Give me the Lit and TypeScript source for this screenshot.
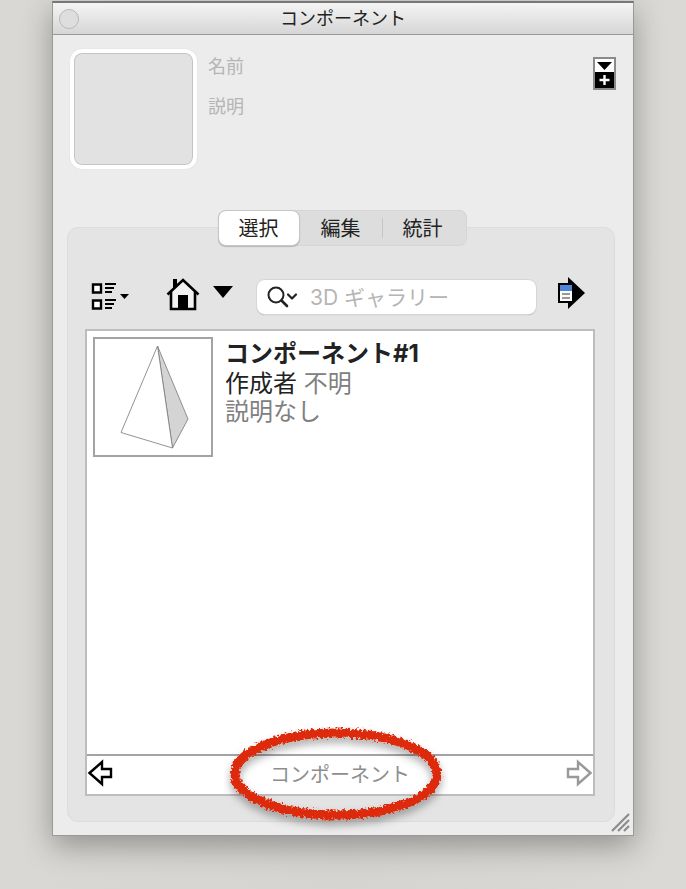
import { LitElement, html, css } from "lit";
import { customElement, state } from "lit/decorators.js";
import { classMap } from "lit/directives/class-map.js";

const TABS = ["選択", "編集", "統計"];

@customElement("app-root")
export class AppRoot extends LitElement {
  @state() private active = 0;

  static styles = css`
    :host {
      display: flex;
      box-sizing: border-box;
      min-height: 100vh;
      padding: 1px 52px 53px;
      background: linear-gradient(90deg, #d9d8d4, #d5d4d1 50%, #dad9d5);
      font-family: Inter, "Noto Sans CJK JP", sans-serif;
      color: #222;
      overflow: hidden;
    }
    * {
      box-sizing: border-box;
    }
    button,
    input {
      font: inherit;
      color: inherit;
      margin: 0;
      padding: 0;
      border: 0;
      background: none;
      outline-offset: 2px;
    }
    svg {
      display: block;
    }
    .window {
      position: relative;
      flex: 1;
      min-width: 0;
      display: flex;
      flex-direction: column;
      border: 1px solid #999;
      border-top: 2px solid #777;
      background: #ececec;
      box-shadow: 0 10px 28px rgba(0, 0, 0, 0.32);
    }
    .titlebar {
      display: grid;
      grid-template-columns: 32px 1fr 32px;
      align-items: center;
      height: 32px;
      border-bottom: 1px solid #999;
      background: linear-gradient(#f4f4f4, #d6d6d6);
    }
    .close {
      width: 20px;
      height: 20px;
      margin-left: 6px;
      border: 1px solid #b9b9b9;
      border-radius: 50%;
      background: #dedede;
    }
    .title {
      margin: 0;
      text-align: center;
      font-size: 18px;
      line-height: 24px;
      font-weight: 400;
    }
    .summary {
      display: flex;
      gap: 11px;
      padding: 14px 17px 0;
    }
    .preview {
      width: 127px;
      height: 120px;
      border: 4px solid #fff;
      border-radius: 12px;
      background: #e2e2e2;
      box-shadow: inset 0 0 0 1px #c4c4c4, 0 0 1px #ccc;
    }
    .fields {
      flex: 1;
      min-width: 0;
      display: flex;
      flex-direction: column;
      gap: 12px;
      padding-top: 3px;
    }
    .fields input {
      width: 100%;
      height: 28px;
      font-size: 18px;
    }
    input::placeholder {
      color: #b5b5b5;
      opacity: 1;
    }
    .expand {
      align-self: flex-start;
      margin-top: 8px;
    }
    .tabs {
      position: relative;
      z-index: 1;
      align-self: center;
      display: flex;
      height: 36px;
      margin: 41px 2px 0 0;
      padding-right: 3px;
      border-radius: 8px;
      background: #dddddd;
      box-shadow: inset 0 0 0 1px #d6d6d6;
    }
    .tab {
      width: 82px;
      padding-top: 2px;
      font-size: 20px;
      line-height: 34px;
      border-radius: 8px;
    }
    .tab.on {
      background: #fff;
      border: 1px solid #c6c6c6;
      line-height: 32px;
      box-shadow: 0 1px 1px rgba(0, 0, 0, 0.2);
    }
    .tab + .tab:not(.on) {
      background: linear-gradient(#c6c6c6, #c6c6c6) left center / 1px 20px no-repeat;
    }
    .tab.on + .tab:not(.on) {
      background: none;
    }
    .panel {
      flex: 1;
      display: flex;
      flex-direction: column;
      gap: 15px;
      margin: -19px 18px 13px 14px;
      padding: 52px 19px 25px 17px;
      border: 1px solid #dcdcdc;
      border-radius: 11px;
      background: #e4e4e4;
    }
    .toolbar {
      display: flex;
      align-items: center;
      height: 34px;
      padding: 0 9px 0 6px;
    }
    .view {
      margin-bottom: 3px;
    }
    .home {
      margin: 0 13px 5px 36px;
    }
    .more {
      margin-bottom: 10px;
    }
    .search {
      flex: 1;
      min-width: 0;
      display: flex;
      align-items: center;
      gap: 12px;
      height: 34px;
      margin: 0 21px 0 24px;
      padding: 0 10px;
      border-radius: 8px;
      background: #fff;
      box-shadow: 0 0 0 1px #d6d6d6, 0 1px 1px #999;
    }
    .search input {
      flex: 1;
      min-width: 0;
      height: 32px;
      font-size: 21px;
    }
    .go {
      margin-bottom: 8px;
    }
    .browser {
      flex: 1;
      display: flex;
      flex-direction: column;
      border: 2px solid #bdbdbd;
      background: #fff;
    }
    .items {
      flex: 1;
      margin: 0;
      padding: 6px;
      list-style: none;
    }
    .item {
      display: flex;
      gap: 12px;
    }
    .thumb {
      flex: none;
      width: 120px;
      height: 120px;
      border: 2px solid #a3a3a3;
    }
    .name,
    .line {
      margin: 0;
      font-size: 24px;
      line-height: 28px;
    }
    .name {
      font-weight: 700;
      line-height: 33px;
    }
    .muted {
      color: #808080;
    }
    .pager {
      position: relative;
      display: flex;
      align-items: center;
      justify-content: space-between;
      height: 40px;
      padding-bottom: 4px;
      border-top: 2px solid #a3a3a3;
      color: #8e8e8e;
      font-size: 20px;
    }
    .mark {
      position: absolute;
      left: calc(50% - 119px);
      top: -42px;
      pointer-events: none;
    }
    .grip {
      position: absolute;
      right: 0;
      bottom: 0;
    }
  `;

  render() {
    return html`
      <main class="window">
        <header class="titlebar">
          <button class="close" aria-label="閉じる"></button>
          <h1 class="title">コンポーネント</h1>
        </header>

        <section class="summary">
          <div class="preview"></div>
          <div class="fields">
            <input aria-label="名前" placeholder="名前" />
            <input aria-label="説明" placeholder="説明" />
          </div>
          <button class="expand" aria-label="表示を切り替え">
            <svg width="23" height="33" viewBox="0 0 23 33">
              <rect x="1" y="1" width="21" height="31" fill="#fff" stroke="#8a8a8a" stroke-width="2" />
              <path d="M4 5h15l-7.500 8z" fill="#000" />
              <path d="M2 15h19v16H2z" fill="#000" />
              <path d="M11.500 18v10M6.500 23h10" stroke="#fff" stroke-width="2.400" />
            </svg>
          </button>
        </section>

        <div class="tabs" role="tablist">
          ${TABS.map(
            (label, i) => html`<button
              role="tab"
              aria-selected=${i === this.active}
              class=${classMap({ tab: true, on: i === this.active })}
              @click=${() => (this.active = i)}
            >${label}</button>`
          )}
        </div>

        <section class="panel">
          <div class="toolbar">
            <button class="view" aria-label="表示オプション">
              <svg width="39" height="28" viewBox="0 0 39 28">
                <path d="M2 2.500h8v8H2zM2 18.500h8v8H2z" fill="#fff" stroke="#000" stroke-width="2.400" />
                <path d="M14 2h11M14 6h9M14 10h7M14 18h11M14 22h9M14 26h7" stroke="#000" stroke-width="2.200" />
                <path d="M29 12h9l-4.500 5z" fill="#000" />
              </svg>
            </button>
            <button class="home" aria-label="モデル内">
              <svg width="34" height="33" viewBox="0 0 34 33">
                <path d="M5 15L17 4l12 11v16H5z" fill="#f2f2f2" />
                <path d="M5 14v17h24V14" fill="none" stroke="#000" stroke-width="2.600" />
                <path d="M1.500 16.500L17 2l15.500 14.500" fill="none" stroke="#000" stroke-width="2.600" />
                <path d="M7 1h4v6L7 11zM12 17h10v14H12z" fill="#000" />
              </svg>
            </button>
            <button class="more" aria-label="ナビゲーション">
              <svg width="20" height="12" viewBox="0 0 20 12"><path d="M0 0h20L10 12z" fill="#000" /></svg>
            </button>
            <label class="search">
              <svg width="31" height="22" viewBox="0 0 31 22" fill="none" stroke="#222" stroke-linecap="round">
                <circle cx="9" cy="9" r="7.500" stroke-width="2" />
                <path d="M14.500 14.500l5.500 5.500" stroke-width="2.600" />
                <path d="M21 8.500l4 4 4-4" stroke-width="2.200" stroke-linejoin="round" />
              </svg>
              <input aria-label="3D ギャラリー" placeholder="3D ギャラリー" />
            </label>
            <button class="go" aria-label="詳細">
              <svg width="29" height="32" viewBox="0 0 29 32">
                <path d="M11 0L28 16 11 32v-6H1V6h10z" fill="#000" />
                <path d="M3 8h12v16H3z" fill="#fff" />
                <path d="M3 8h12v6H3z" fill="#4d86d6" />
                <path d="M5 17h8M5 21h8" stroke="#777" stroke-width="1.600" />
              </svg>
            </button>
          </div>

          <div class="browser">
            <ul class="items">
              <li class="item">
                <svg class="thumb" viewBox="0 0 116 116" stroke-linejoin="round">
                  <path d="M62.500 7L93 80l-15.500 29z" fill="#d4d4d4" stroke="#777" stroke-width=".8" />
                  <path d="M62.500 7L26 93.500 77.500 109z" fill="#fff" stroke="#777" stroke-width=".8" />
                </svg>
                <div>
                  <h2 class="name">コンポーネント#1</h2>
                  <p class="line">作成者 <span class="muted">不明</span></p>
                  <p class="line muted">説明なし</p>
                </div>
              </li>
            </ul>
            <nav class="pager">
              <button aria-label="戻る">
                <svg width="27" height="28" viewBox="0 0 27 28">
                  <path d="M2.500 14L15 3v7h9v8h-9v7z" fill="#fff" stroke="#000" stroke-width="2.400" />
                </svg>
              </button>
              <span>コンポーネント</span>
              <button aria-label="進む">
                <svg width="27" height="28" viewBox="0 0 27 28">
                  <path d="M24.500 14L12 3v7H2v8h10v7z" fill="#fff" stroke="#999" stroke-width="2.400" />
                </svg>
              </button>
              <svg class="mark" width="230" height="124" viewBox="0 0 230 124" aria-hidden="true">
                <defs>
                  <filter id="crayon" x="-5%" y="-15%" width="110%" height="140%">
                    <feTurbulence type="fractalNoise" baseFrequency=".4" numOctaves="2" seed="4" result="n" />
                    <feDisplacementMap in="SourceGraphic" in2="n" scale="7" xChannelSelector="R" yChannelSelector="G" result="r" />
                    <feDropShadow in="r" dx="0" dy="5" stdDeviation="4" flood-color="#000" flood-opacity=".35" />
                  </filter>
                </defs>
                <ellipse cx="115" cy="60" rx="101" ry="41" fill="none" stroke="#dd2a08" stroke-width="9" filter="url(#crayon)" />
              </svg>
            </nav>
          </div>
        </section>

        <svg class="grip" width="22" height="22" viewBox="0 0 22 22" stroke="#8c8c8c" stroke-width="2.200">
          <path d="M1 18L18 1M7 18L18 7M13 18l5-5" />
        </svg>
      </main>
    `;
  }
}
